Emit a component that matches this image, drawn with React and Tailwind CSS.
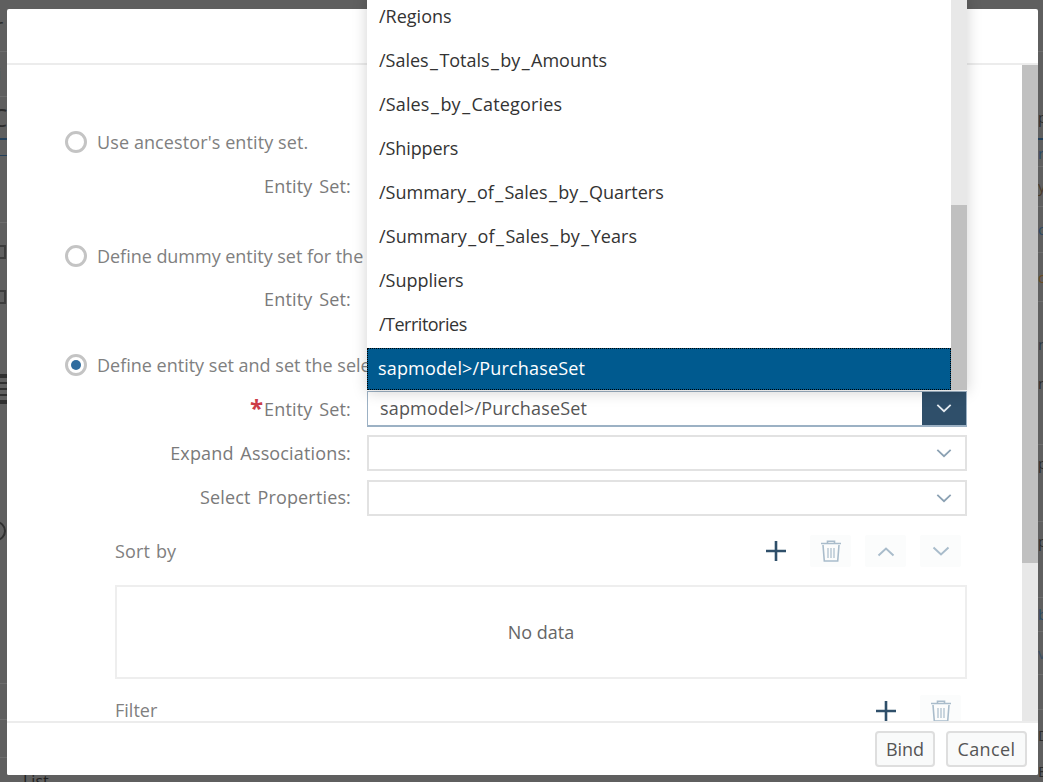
const rows = [["/Regions",""],["/Sales_Totals_by_Amounts",""],["/Sales_by_Categories","tracking-[0.15px]"],["/Shippers","tracking-[-0.1px]"],["/Summary_of_Sales_by_Quarters",""],["/Summary_of_Sales_by_Years","tracking-[0.08px]"],["/Suppliers",""],["/Territories","tracking-[-0.5px]"]];

const rightRows = [
  ["h-[52px] border-b border-[#6d6d6d]", ""],
  ["h-[53px]", ""],
  ["h-[24px] text-[#2c2c2c]", "p"],
  ["h-[11px] border-b-2 border-[#24405a]", ""],
  ["h-[27px] border-b border-[#6d6d6d] text-[#2a4a66]", "r"],
  ["h-[40px] border-b border-[#6d6d6d] text-[#4a3a2a]", "y"],
  ["h-[46px] border-b border-[#6d6d6d] text-[#2a4a66]", "o"],
  ["h-[49px] border-b border-[#6d6d6d] text-[#6a4a20]", "c"],
  ["h-[20px]", ""],
  ["h-[44px] text-[#2c3a46]", "n"],
  ["h-[34px] text-[#2c2c2c]", "n"],
  ["h-[45px] border-b border-[#6d6d6d]", ""],
  ["h-[36px] text-[#2c2c2c]", "p"],
  ["h-[41px] border-b border-[#6d6d6d]", ""],
  ["h-[38px] text-[#2c2c2c]", "p"],
  ["h-[38px] border-b border-[#6d6d6d]", ""],
  ["h-[34px] border-b border-[#6d6d6d] text-[#2a4a66]", "b"],
  ["h-[43px] border-b border-[#6d6d6d] text-[#3a4f63]", "v"],
  ["h-[35px] border-b border-[#6d6d6d]", ""],
  ["h-[50px] text-[#2c2c2c]", "D"],
  ["h-[22px] text-[#2c2c2c]", "E"],
];

function Wide({ text }) {
  return text.split(/(_)/).map((p, i) => p === "_" ? <span key={i} className="mx-[1.4px]">_</span> : <span key={i}>{p}</span>);
}

function Chevron({ up, className, w = 16 }) {
  return <svg width={w} height="11" viewBox="0 0 18 11" fill="none" className={className}>
    <path d={up ? "M1.5 9.5 9 2.5l7.5 7" : "M1.5 1.5 9 8.5l7.5-7"} stroke="currentColor" strokeWidth="2" />
  </svg>;
}
function Plus() {
  return <svg width="22" height="22" viewBox="0 0 22 22" fill="none" className="text-[#2f4f6a]">
    <path d="M1 11h20M11 1v20" stroke="currentColor" strokeWidth="2.6" />
  </svg>;
}
function Trash() {
  return <svg width="22" height="24" viewBox="0 0 22 24" fill="none" className="text-[#a9bccb]">
    <path d="M1 4.5h20M7.5 4V2.2h7V4" stroke="currentColor" strokeWidth="1.6" />
    <path d="M3 6l1.3 16h13.4L19 6" stroke="currentColor" strokeWidth="1.6" />
    <path d="M8 9v10M11 9v10M14 9v10" stroke="currentColor" strokeWidth="1.2" />
  </svg>;
}
function IconBtn({ children, ghost }) {
  return <div className={`w-[41px] h-[32px] flex items-center justify-center rounded-[2px] ${ghost ? "" : "bg-[#fbfcfc]"}`}>{children}</div>;
}
function Radio({ on, children, className = "" }) {
  return <div className={`h-[44px] flex items-center gap-[10px] pl-[58px] text-[18px] text-[#808080] whitespace-nowrap ${className}`}>
    <span className="w-[22px] h-[22px] rounded-full border-[3px] border-[#c4c4c4] flex items-center justify-center shrink-0">
      {on && <span className="w-[10px] h-[10px] rounded-full bg-[#2f6c9e]"></span>}
    </span>
    <span>{children}</span>
  </div>;
}
function Label({ req, children }) {
  return <div className="w-[345px] shrink-0 pr-[1px] flex justify-end items-center text-[18px] text-[#7a7a7a] whitespace-nowrap tracking-[0.15px] [word-spacing:2px]">
    {req && <span className="text-[24px] leading-[18px] text-[#cc3d47] font-bold -mt-[3px] mr-[1px]">*</span>}
    {children}
  </div>;
}
function Select({ className = "" }) {
  return <div className={`w-[600px] h-[36px] ml-[15px] border-2 border-[#e2e2e2] flex items-center justify-end pr-[13px] text-[#8ba1b3] ${className}`}>
    <Chevron />
  </div>;
}

export default function App() {
  return <div className="relative w-[1043px] h-[782px] overflow-hidden bg-[#5f5f5f] font-['Open_Sans',sans-serif]">
    {/* dimmed page behind the dialog */}
    <div className="w-[7px] h-[782px] overflow-hidden flex flex-col text-[#2c2c2c]">
      <div className="h-[52px] shrink-0 border-b border-[#6d6d6d] flex items-center"><span className="-ml-[5px] text-[20px]">r</span></div>
      <div className="h-[45px] shrink-0 border-b border-[#6d6d6d] flex items-center"><span className="-ml-[3px] text-[16px]">i</span></div>
      <div className="h-[43px] shrink-0 border-b-2 border-[#24405a] flex items-center"><span className="-ml-[9px] text-[26px]">C</span></div>
      <div className="h-[16px] shrink-0 border-b border-[#24405a]"></div>
      <div className="h-[67px] shrink-0 border-b border-[#6d6d6d]"></div>
      <div className="h-[22px] shrink-0"></div>
      <div className="w-[6px] h-[14px] shrink-0 border-y-2 border-r-2 border-[#3c3c3c]"></div>
      <div className="h-[31px] shrink-0"></div>
      <div className="w-[6px] h-[14px] shrink-0 border-y-2 border-r-2 border-[#3c3c3c]"></div>
      <div className="h-[70px] shrink-0"></div>
      <div className="w-[7px] h-[30px] shrink-0 border-y-2 border-[#2f2f2f] bg-[repeating-linear-gradient(#2f2f2f_0_2px,#5f5f5f_2px_6px)]"></div>
      <div className="h-[117px] shrink-0"></div>
      <div className="-ml-[14px] w-[20px] h-[20px] shrink-0 rounded-full border-2 border-[#2f2f2f]"></div>
      <div className="h-[143px] shrink-0 border-b border-[#6d6d6d]"></div>
      <div className="h-[36px] shrink-0 border-b border-[#6d6d6d]"></div>
      <div className="h-[38px] shrink-0 border-b border-[#6d6d6d]"></div>
    </div>
    <div className="absolute left-[23px] top-[771px] text-[16px] leading-[20px] text-[#1f1f1f]">List</div>
    <div className="absolute right-0 top-0 w-[5px] h-[782px] overflow-hidden flex flex-col text-[15px] leading-none">
      {rightRows.map(([c, t], i) => <div key={i} className={`${c} shrink-0 flex items-center`}>{t}</div>)}
    </div>

    {/* dialog */}
    <div className="absolute left-[7px] top-[9px] w-[1031px] h-[766px] bg-white rounded-[2px] flex flex-col overflow-hidden">
      <div className="h-[56px] shrink-0 border-b-2 border-[#ececec]"></div>
      <div className="h-[656px] flex min-h-0">
        <div className="flex-1 min-w-0 overflow-hidden pt-[55px]">
          <Radio className="tracking-[0.1px]">Use ancestor's entity set.</Radio>
          <div className="h-[44px] flex items-center"><Label>Entity Set:</Label></div>
          <Radio className="mt-[26px] -tracking-[0.03px]">Define dummy entity set for the selected control.</Radio>
          <div className="h-[44px] -mt-[1px] flex items-center"><Label>Entity Set:</Label></div>
          <Radio on className="mt-[22px]">Define entity set and set the selected properties.</Radio>
          <div className="h-[44px] flex items-center">
            <Label req>Entity Set:</Label>
            <div className="w-[600px] h-[36px] ml-[15px] border border-b-2 border-[#9cb1c4] flex items-center text-[18px] text-[#555555]">
              <span className="flex-1 pl-[12px] tracking-[0.17px]">sapmodel&gt;/PurchaseSet</span>
              <span className="w-[44px] h-full bg-[#2f4f6a] flex items-center justify-center text-[#e6ecf1]"><Chevron /></span>
            </div>
          </div>
          <div className="h-[44px] flex items-center"><Label>Expand Associations:</Label><Select /></div>
          <div className="h-[44px] flex items-center"><Label>Select Properties:</Label><Select className="mt-[2px]" /></div>
          <div className="mt-[16px] ml-[108px] mr-[61px] h-[32px] flex items-center justify-between">
            <span className="text-[18px] text-[#808080] tracking-[0.15px] [word-spacing:1px]">Sort by</span>
            <div className="flex gap-[14px]">
              <IconBtn ghost><Plus /></IconBtn>
              <IconBtn><Trash /></IconBtn>
              <IconBtn><Chevron up w={20} className="text-[#a9bccb]" /></IconBtn>
              <IconBtn><Chevron w={20} className="text-[#a9bccb]" /></IconBtn>
            </div>
          </div>
          <div className="mt-[18px] ml-[108px] w-[852px] h-[94px] border-2 border-[#eeeeee] flex items-center justify-center text-[18px] text-[#666666]">No data</div>
          <div className="mt-[16px] ml-[108px] mr-[61px] h-[32px] flex items-center justify-between">
            <span className="text-[18px] text-[#808080] -mt-[2px]">Filter</span>
            <div className="flex gap-[14px]">
              <IconBtn ghost><Plus /></IconBtn>
              <IconBtn><Trash /></IconBtn>
            </div>
          </div>
        </div>
        <div className="w-[16px] shrink-0 bg-[#e8e8e8]"><div className="h-[498px] bg-[#c0c0c0]"></div></div>
      </div>
      <div className="flex-1 border-t-2 border-[#ececec] flex items-start justify-end gap-[11px] pt-[8px] pr-[11px] bg-white">
        <button className="w-[60px] h-[36px] border-2 border-[#dedede] rounded-[4px] bg-[#f9fafa] text-[18px] text-[#555555]">Bind</button>
        <button className="w-[81px] h-[36px] border-2 border-[#dedede] rounded-[4px] bg-[#f9fafa] text-[18px] text-[#555555] tracking-[0.4px]">Cancel</button>
      </div>
    </div>

    {/* open dropdown list */}
    <div className="absolute left-[367px] -top-[6px] w-[600px] h-[396px] bg-white flex shadow-[0_2px_14px_rgba(0,0,0,0.18)]">
      <div className="flex-1 min-w-0 flex flex-col text-[18px] text-[#333333]">
        {rows.map(([r, t]) => <div key={r} className={`h-[44px] shrink-0 flex items-center pl-[12px] ${t}`}><span><Wide text={r} /></span></div>)}
        <div className="mt-[2px] h-[42px] shrink-0 flex items-center pl-[10px] pb-[2px] bg-[#005a8f] border border-dotted border-black text-white tracking-[0.17px]">sapmodel&gt;/PurchaseSet</div>
      </div>
      <div className="w-[16px] shrink-0 bg-[#e8e8e8] flex flex-col justify-end"><div className="h-[185px] bg-[#c0c0c0]"></div></div>
    </div>
  </div>;
}
